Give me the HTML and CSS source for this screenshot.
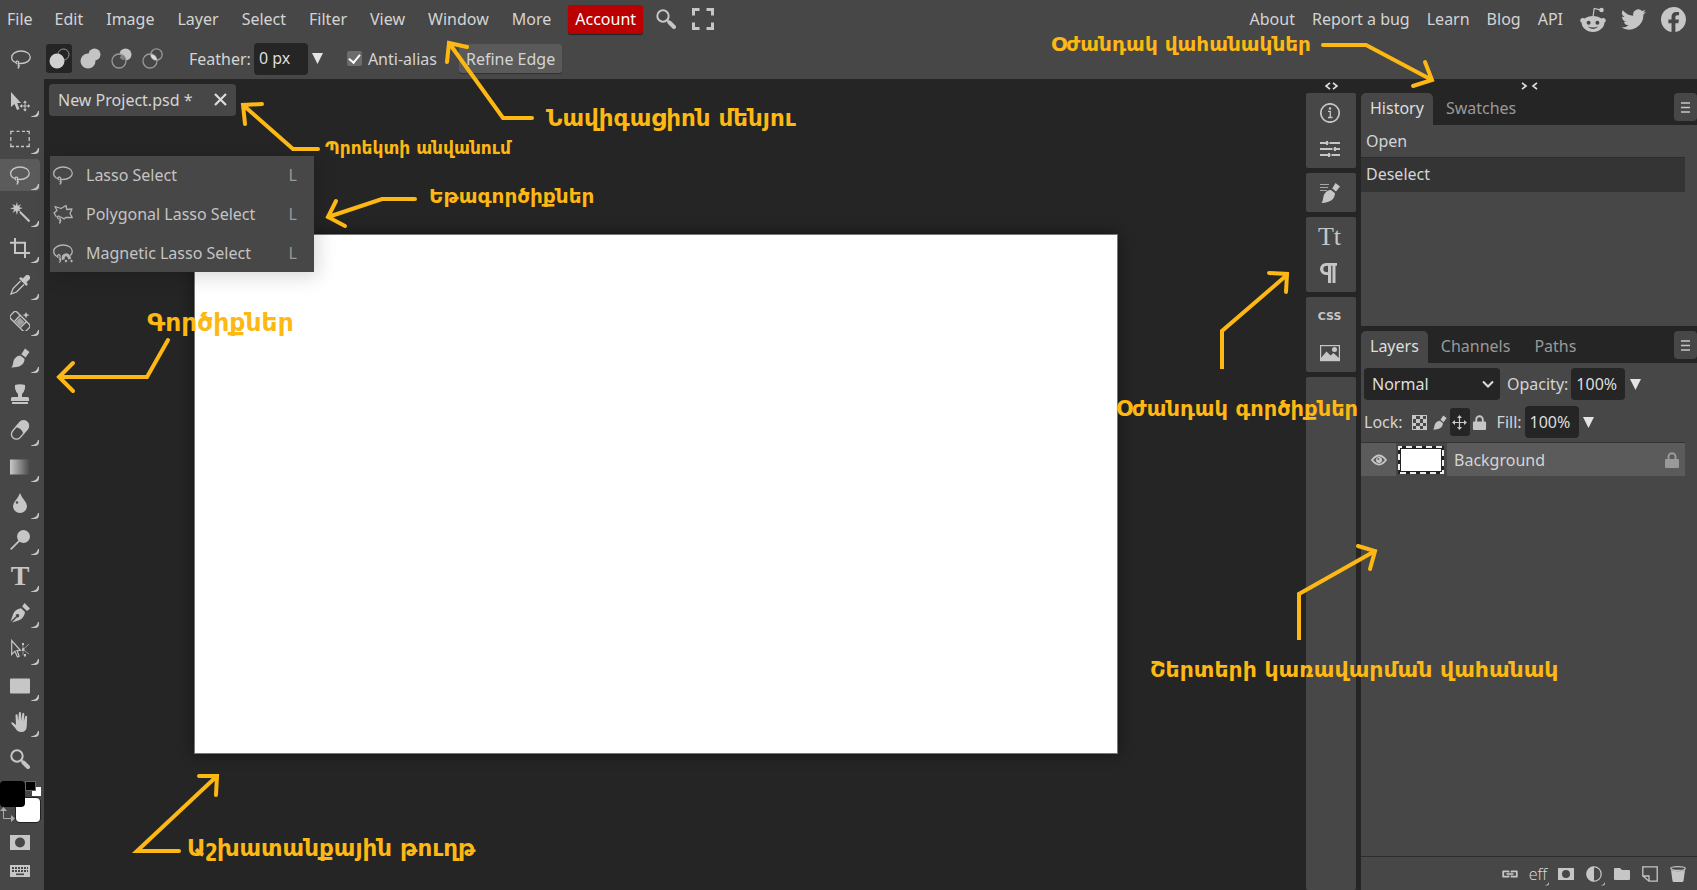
FILE: index.html
```html
<!DOCTYPE html>
<html lang="en">
<head>
<meta charset="utf-8">
<title>New Project.psd *</title>
<link rel="stylesheet" href="styles.css">
</head>
<body>
<svg class="defs" aria-hidden="true">
  <defs>
    <linearGradient id="fade"><stop offset="0" stop-color="#c8c8c8"/><stop offset="1" stop-color="#474747"/></linearGradient>
    <symbol id="lasso" viewBox="0 0 20 20"><g fill="none" stroke="currentColor" stroke-width="1.3"><path d="M5 13.500C2 12.500.7 10.500.7 8.400.7 4.800 4.800 2 10 2s9.300 2.700 9.300 6.200-4.100 6.300-9.300 6.300c-1 0-2-.1-2.800-.3"/><path d="M7.500 14.200c.6-1.400-.6-2.500-1.700-2-1.300.6-.9 2.500.4 2.700M7 14.200c1 1.200 1 2.600-.4 2.500M7.600 15.500c.9 1 .6 2.500-.8 4"/></g></symbol>
    <symbol id="poly" viewBox="0 0 20 20"><g fill="none" stroke="currentColor" stroke-width="1.300" stroke-linejoin="round"><path d="M3.500 13 1 9l3-2.500L2 2.500l6 2 5-3 .8 4 5.200-.5-2 4.500 2.300 4-6.300-.2-2 1.700L8 13"/><path d="M7 14.200c.6-1.400-.6-2.500-1.700-2-1.300.6-.9 2.500.4 2.700M6.500 14.200c1 1.200 1 2.600-.4 2.500M7.100 15.500c.9 1 .6 2.500-.8 4"/></g></symbol>
    <symbol id="magnet" viewBox="0 0 20 20"><g fill="none" stroke="currentColor" stroke-width="1.300"><path d="M4 13.500C2 12.500.7 10.500.7 8.400.7 4.800 4.800 2 10 2s9.300 2.700 9.300 6.200c0 1.800-.8 3.200-2 4.300"/><path d="M7 13.800c.6-1.400-.6-2.500-1.700-2-1.300.6-.9 2.500.4 2.700M6.500 14.200c1 1.200 1 2.600-.4 2.500M7.100 15.500c.9 1 .6 2.500-.8 4"/><path stroke-width="3" d="M10.500 16.500c-1.600-4 3-6 5-3.500l1.500 3"/><path stroke-width="2" d="M12 18.500l2-1M18 17l1 2"/></g></symbol>
    <symbol id="brush" viewBox="0 0 20 20"><path fill="currentColor" d="M15 .5 19.500 4l-4 5.500-4.200-3.200zM10.300 7.500l4.200 3.200c.3 3-1.500 6-4.500 7.300-2.500 1.200-5.500 1.500-8.800 1.400 2-1.500 1.500-3.500 2.300-6.200.9-3 3.700-5.500 6.800-5.700z"/></symbol>
    <symbol id="glass" viewBox="0 0 20 20"><circle cx="7" cy="7" r="5.700" fill="none" stroke="currentColor" stroke-width="2"/><path d="m11 11 2 2" stroke="currentColor" stroke-width="2"/><path d="m13.500 13.500 4.500 4.500" stroke="currentColor" stroke-width="4" stroke-linecap="round"/></symbol>
    <symbol id="corner" viewBox="0 0 8 6"><path fill="currentColor" d="M0 5.500C4 5 6.500 3 7 0H8v2C8 4.500 6.500 6 4 6H0z"/></symbol>
    <symbol id="lock" viewBox="0 0 14 16"><path fill="currentColor" d="M1 7h12q1 0 1 1v7q0 1-1 1H1q-1 0-1-1V8q0-1 1-1z"/><path d="M3.500 8V4.800a3.500 3.500 0 0 1 7 0V8" fill="none" stroke="currentColor" stroke-width="2"/></symbol>
    <symbol id="down" viewBox="0 0 11 11"><path fill="currentColor" d="M0 0h11L5.500 11z"/></symbol>
    <symbol id="lines" viewBox="0 0 9 11"><path d="M0 1h9M0 5.500h9M0 10h9" stroke="currentColor" stroke-width="1.300"/></symbol>
    <symbol id="mask" viewBox="0 0 20 15"><path fill="currentColor" fill-rule="evenodd" d="M0 0h20v15H0zM10 2.500a5 5 0 1 0 0 10 5 5 0 0 0 0-10z"/></symbol>
  </defs>
</svg>

<div class="app">
  <header class="menubar">
    <nav class="menus" aria-label="Main menu">
      <button>File</button><button>Edit</button><button>Image</button><button>Layer</button><button>Select</button><button>Filter</button><button>View</button><button>Window</button><button>More</button>
      <button class="account">Account</button>
      <button class="head-icon" aria-label="Search"><svg class="i20"><use href="#glass"/></svg></button>
      <button class="head-icon full" aria-label="Fullscreen"><svg class="i22" viewBox="0 0 22 22"><path d="M1.500 7.500v-6h6M14.500 1.500h6v6M20.500 14.500v6h-6M7.500 20.500h-6v-6" fill="none" stroke="currentColor" stroke-width="3"/></svg></button>
    </nav>
    <nav class="links" aria-label="Site">
      <a href="#">About</a><a href="#">Report a bug</a><a href="#">Learn</a><a href="#">Blog</a><a href="#">API</a>
      <a href="#" aria-label="Reddit"><svg class="i26" viewBox="0 0 26 26"><path fill="currentColor" fill-rule="evenodd" d="M13 10c3.400 0 6.300 1 8.300 2.500 1.200-1 3.200-.8 4 .6.900 1.400.4 3-.9 3.700C24.300 21.500 19.500 26 13 26S1.700 21.500 1.600 16.800C.3 16.100-.2 14.500.7 13.100c.8-1.400 2.800-1.600 4-.6C6.700 11 9.600 10 13 10zM8.600 14.700a2 2 0 1 0 0 4 2 2 0 0 0 0-4zm8.800 0a2 2 0 1 0 0 4 2 2 0 0 0 0-4zM7.800 20.500c2.800 3.200 7.600 3.200 10.400 0-3 1.300-7.400 1.300-10.400 0z"/><path d="m13 11 1.200-8.500 6 1.300" fill="none" stroke="currentColor" stroke-width="1.200"/><circle cx="21.500" cy="4" r="2.300" fill="currentColor"/></svg></a>
      <a href="#" aria-label="Twitter"><svg class="i25" viewBox="0 0 24 24"><path fill="currentColor" d="M24 4.600a10 10 0 0 1-2.800.8 5 5 0 0 0 2.100-2.700 10 10 0 0 1-3.100 1.200 4.900 4.900 0 0 0-8.400 4.500A14 14 0 0 1 1.700 3.200a4.900 4.900 0 0 0 1.500 6.500 5 5 0 0 1-2.200-.6 4.900 4.900 0 0 0 3.900 4.900 5 5 0 0 1-2.200.1 4.900 4.900 0 0 0 4.600 3.400A9.900 9.900 0 0 1 0 19.500 14 14 0 0 0 21.500 7.100 10 10 0 0 0 24 4.600z"/></svg></a>
      <a href="#" aria-label="Facebook"><svg class="i25" viewBox="0 0 24 24"><path fill="currentColor" d="M24 12a12 12 0 1 0-13.900 11.900v-8.400H7.100V12h3V9.400c0-3 1.800-4.700 4.500-4.700 1.400 0 2.700.2 2.700.2v3h-1.500c-1.500 0-2 .9-2 1.900V12h3.400l-.5 3.500h-2.900v8.400A12 12 0 0 0 24 12z"/></svg></a>
    </nav>
  </header>

  <div class="options">
    <svg class="i20 opt-tool"><use href="#lasso"/></svg>
    <div class="bools">
      <button class="on" aria-label="New selection"><svg viewBox="0 0 21 21"><circle cx="14.500" cy="6.500" r="5.500" fill="none" stroke="#999"/><circle cx="8" cy="13" r="7.500" fill="#d0d0d0"/></svg></button>
      <button aria-label="Unite"><svg viewBox="0 0 21 21"><path d="M14.500 6.500 8 13" stroke="#c4c4c4" stroke-width="9"/><circle cx="14.500" cy="6.500" r="6" fill="#c4c4c4"/><circle cx="8" cy="13" r="7.500" fill="#c4c4c4"/></svg></button>
      <button aria-label="Subtract"><svg viewBox="0 0 21 21"><circle cx="14.500" cy="6.500" r="6" fill="#c4c4c4"/><circle cx="8" cy="13" r="7" fill="#474747" stroke="#999" stroke-width="1.300"/><path d="M9 10a6 6 0 0 0 5 2 7 7 0 0 0-4-5z" fill="#c4c4c4" opacity=".5"/></svg></button>
      <button aria-label="Intersect"><svg viewBox="0 0 21 21"><circle cx="14.500" cy="6.500" r="5.700" fill="none" stroke="#999" stroke-width="1.300"/><circle cx="8" cy="13" r="7" fill="none" stroke="#999" stroke-width="1.300"/><path d="M8.800 6.200a6 6 0 0 0 6 6A7 7 0 0 0 8.800 6.200z" fill="#ddd"/></svg></button>
    </div>
    <label for="feather">Feather:</label>
    <input class="field" id="feather" value="0 px">
    <button class="drop" aria-label="Feather range"><svg><use href="#down"/></svg></button>
    <label class="check"><input type="checkbox" checked>Anti-alias</label>
    <button class="refine">Refine Edge</button>
  </div>

  <div class="main">
    <aside class="side">
      <div class="tools">
        <button aria-label="Move"><svg class="i20" viewBox="0 0 20 20"><path fill="currentColor" d="M1 0v15l3.500-3L7 18l2.500-1L7.200 11H11z"/><path d="M15 9.500v9M10.500 14h9" stroke="currentColor"/><path fill="currentColor" d="m15 8.500 2 2.300h-4zM15 19.500l2-2.300h-4zM9.800 14l2.200-2v4zM20 14l-2-2v4z"/></svg><svg class="corner"><use href="#corner"/></svg></button>
        <button aria-label="Rectangle select"><svg class="i20" viewBox="0 0 20 20"><path d="M.8 5.500V2.300h3M6.500 2.300h3M12 2.300h3M16.500 2.300h2.700v3M19.200 8v4M19.200 14.500v3h-3M14 17.500h-3M9 17.500H6M4 17.500H.8v-3M.8 12V8" fill="none" stroke="currentColor" stroke-width="1.300"/></svg><svg class="corner"><use href="#corner"/></svg></button>
        <button class="on" aria-label="Lasso"><svg class="i20"><use href="#lasso"/></svg><svg class="corner"><use href="#corner"/></svg></button>
        <button aria-label="Magic wand"><svg class="i20" viewBox="0 0 20 20"><path fill="currentColor" d="m7 0 .8 4L11 2 9.200 5.200l3.800.8-3.700 1.300L11 10 8 8.600 7 13 5.700 8.700 2.500 11l1.700-3.500L0 6.500l4-1.200L2.300 2l3.400 1.800z"/><path d="m10 10 9.500 9.500" stroke="currentColor" stroke-width="2"/></svg><svg class="corner"><use href="#corner"/></svg></button>
        <button aria-label="Crop"><svg class="i20" viewBox="0 0 20 20"><path d="M5 0v15h15M0 4.800h15V20" fill="none" stroke="currentColor" stroke-width="2"/></svg><svg class="corner"><use href="#corner"/></svg></button>
        <button aria-label="Eyedropper"><svg class="i20" viewBox="0 0 20 20"><path d="M10.500 6 3 13.500 1 19l5.500-2L14 9.500" fill="none" stroke="currentColor" stroke-width="1.300"/><path fill="currentColor" d="m9 3.500 2-1.500 1.800 1.500L15.500.8a2.700 2.700 0 0 1 3.900 3.800L16.500 7.300l1.400 1.900-1.600 1.900z"/></svg><svg class="corner"><use href="#corner"/></svg></button>
        <button aria-label="Healing brush"><svg class="i20" viewBox="0 0 20 20"><g fill="none" stroke="currentColor" stroke-width="1.300"><rect x="-1" y="6" width="22" height="9" rx="2.500" transform="rotate(45 10 10.500)"/><path d="m4.500 10.500 5.500-6M10.500 16.500l6-6"/></g><path fill="currentColor" d="m10 6.500 4.500 4.500-4.500 4.500L5.500 11z" opacity=".7"/><path fill="currentColor" d="m16 1 1 2.200 2.500.8-2.500 1-1 2.500-1-2.500L12.500 4l2.500-.8z"/></svg><svg class="corner"><use href="#corner"/></svg></button>
        <button aria-label="Brush"><svg class="i20"><use href="#brush"/></svg><svg class="corner"><use href="#corner"/></svg></button>
        <button aria-label="Clone stamp"><svg class="i20" viewBox="0 0 20 20"><path fill="currentColor" d="M5 1q5-1.500 10 0v3.500q-1 4-3 5.500v3h5.500q1.500 0 1.500 1.500V17H1v-2.500Q1 13 2.500 13H8v-3Q6 8.500 5 4.500zM2 18h16v2H2z"/></svg></button>
        <button aria-label="Eraser"><svg class="i20" viewBox="0 0 20 20"><g transform="rotate(-50 10 10)"><rect x="-.500" y="5" width="21" height="10" rx="5" fill="none" stroke="currentColor" stroke-width="1.300"/><path fill="currentColor" d="M9 4.500h6.500a5.500 5.500 0 0 1 0 11H9q4-5.500 0-11z"/></g></svg><svg class="corner"><use href="#corner"/></svg></button>
        <button aria-label="Gradient"><svg class="i20" viewBox="0 0 20 20"><path fill="url(#fade)" d="M0 2.500h20v15H0z"/></svg><svg class="corner"><use href="#corner"/></svg></button>
        <button aria-label="Blur"><svg class="i20" viewBox="0 0 20 20"><path fill="currentColor" d="M10 0q1.500 4 4.500 7.500 2.500 3 2.500 5.500a7 7 0 0 1-14 0q0-2.500 2.500-5.500Q8.500 4 10 0z"/><circle cx="7" cy="9.500" r="1.200" fill="#474747"/></svg><svg class="corner"><use href="#corner"/></svg></button>
        <button aria-label="Dodge"><svg class="i20" viewBox="0 0 20 20"><circle cx="13.500" cy="6.500" r="6.500" fill="currentColor"/><path d="m.7 19.300 9-9" stroke="currentColor" stroke-width="1.800"/></svg><svg class="corner"><use href="#corner"/></svg></button>
        <button aria-label="Type"><span class="glyph-t">T</span><svg class="corner"><use href="#corner"/></svg></button>
        <button aria-label="Pen"><svg class="i20" viewBox="0 0 20 20"><path fill="currentColor" d="M14.500 0 20 5.500l-3 2.500-4.800-4.500zM11 5.200l4 3.900c-.4 4-2.500 6.900-6 8.200L2 19.600l5-5.400a1.700 1.700 0 1 0-1-1L.5 18.500 3 11.500C4.300 7.800 7 5.600 11 5.200z"/></svg><svg class="corner"><use href="#corner"/></svg></button>
        <button aria-label="Path select"><svg class="i20" viewBox="0 0 20 20"><path d="M1.700 1.500v14l3.200-3.300L7.500 18l1.700-.8L7 11.500h3.500z" fill="none" stroke="currentColor" stroke-width="1.200"/><path d="M13 4.500v12M13 10.500 19 5M13 10.500l6 4.500" stroke="currentColor" fill="none" opacity=".6"/><path fill="currentColor" d="M12 9.300h2.400v2.400H12zM12 4h2v2h-2zM14 15h2v2.500h-2z"/></svg><svg class="corner"><use href="#corner"/></svg></button>
        <button aria-label="Rectangle"><svg class="i20" viewBox="0 0 20 20"><rect y="2.500" width="20" height="15" rx="1" fill="currentColor"/></svg><svg class="corner"><use href="#corner"/></svg></button>
        <button aria-label="Hand"><svg class="i20" viewBox="0 0 20 20"><path fill="currentColor" d="M6 13 5.500 3.500q.1-1.200 1-1.200t1.100 1.200l.7 5.500.5-7.700Q9 0 9.900 0 11 0 11 1.300l.3 7.500 1-7Q12.500.7 13.400.9q1 .2.900 1.300L13.800 9.500l1.300-5Q15.500 3.500 16.300 3.700q1 .3.800 1.500L16.800 14q-.3 6-5.600 6-4 0-6-4L1.500 11.800q-.7-1.200.2-1.500Q3 10 6 13z"/></svg><svg class="corner"><use href="#corner"/></svg></button>
        <button aria-label="Zoom"><svg class="i20"><use href="#glass"/></svg></button>
      </div>
      <div class="colors">
        <button class="bg" aria-label="Background colour"></button>
        <button class="fg" aria-label="Foreground colour"></button>
        <button class="mini-w" aria-label="Default white"></button>
        <button class="mini-b" aria-label="Default black"></button>
        <svg class="swap" viewBox="0 0 15 15"><path d="M3.500 3v8.500H12" fill="none" stroke="#aaa"/><path fill="#aaa" d="M3.500 0 7 4H0zM15 11.500 11 15V8z"/></svg>
      </div>
      <div class="modes">
        <button aria-label="Quick mask"><svg viewBox="0 0 20 15"><use href="#mask"/></svg></button>
        <button aria-label="Keyboard"><svg class="keys" viewBox="0 0 20 12"><rect width="20" height="12" fill="currentColor"/><path d="M2 3h16M2 6h16" stroke="#474747" stroke-width="1.800" stroke-dasharray="2 1"/><path d="M6 9.300h8" stroke="#474747" stroke-width="1.600"/></svg></button>
      </div>
    </aside>

    <main class="stage">
      <div class="doc-tab"><span>New Project.psd *</span><button aria-label="Close"><svg viewBox="0 0 13 13"><path d="m1 1 11 11M12 1 1 12" stroke="currentColor" stroke-width="2.200"/></svg></button></div>
      <div class="board"><div class="paper"></div></div>
      <div class="flyout" role="menu">
        <button role="menuitem"><svg class="i20"><use href="#lasso"/></svg><span>Lasso Select</span><kbd>L</kbd></button>
        <button role="menuitem"><svg class="i20"><use href="#poly"/></svg><span>Polygonal Lasso Select</span><kbd>L</kbd></button>
        <button role="menuitem"><svg class="i20"><use href="#magnet"/></svg><span>Magnetic Lasso Select</span><kbd>L</kbd></button>
      </div>
    </main>

    <div class="rail">
      <button class="fold" aria-label="Expand"><svg width="13" height="8" viewBox="0 0 13 8"><path d="M5 .8 1 4l4 3.200M8 .8 12 4 8 7.200" fill="none" stroke="currentColor" stroke-width="1.700"/></svg></button>
      <div class="group">
        <button aria-label="Info"><svg class="i20" viewBox="0 0 20 20"><circle cx="10" cy="10" r="9.200" fill="none" stroke="currentColor" stroke-width="1.700"/><path d="M8 8.300h2.300v6M8 14.500h4.500" fill="none" stroke="currentColor" stroke-width="1.300"/><circle cx="10" cy="5.500" r="1.200" fill="currentColor"/></svg></button>
        <button aria-label="Properties"><svg class="i20" viewBox="0 0 20 20"><path d="M0 4h20M0 10h20M0 16h20" stroke="currentColor" stroke-width="1.900"/><path d="M7 2v4M15 8v4M9 14v4" stroke="currentColor" stroke-width="2"/><path d="M9 2v4M13 8v4M11 14v4" stroke="#474747"/></svg></button>
      </div>
      <div class="group">
        <button aria-label="Brush settings"><svg class="i20" viewBox="0 0 20 20"><path d="M0 1.500h9M0 4.500h8M0 7.500h7" stroke="currentColor" opacity=".75"/><path fill="currentColor" d="M15.500 0 20 3.500l-4 5-3.800-3zM11 7l4 3.300c-.2 5-3.500 9.500-13.500 9.700 1.500-2 1.300-4 2-6.500C4.500 9.500 7.500 7 11 7z"/></svg></button>
      </div>
      <div class="group">
        <button class="glyph-tt" aria-label="Character">Tt</button>
        <button aria-label="Paragraph"><svg class="i20" viewBox="0 0 20 20"><path fill="currentColor" d="M6 0h11v2.700h-1.500V20h-3V2.700h-1.300V20H8v-8H6A6 6 0 0 1 6 0zm2 2.700Q3.300 2.600 3.300 6T8 9.300z"/></svg></button>
      </div>
      <div class="group">
        <button class="glyph-css">CSS</button>
        <button aria-label="Image"><svg class="i20" viewBox="0 0 20 20"><rect x=".6" y="2.600" width="18.800" height="15" fill="none" stroke="currentColor" stroke-width="1.200"/><path fill="currentColor" d="M1 15 6.500 8.500l4 4 3-2.500L19 15v3H1z"/><circle cx="14.500" cy="6.500" r="2.500" fill="currentColor"/></svg></button>
      </div>
      <div class="group rest"></div>
    </div>

    <aside class="panels">
      <button class="fold" aria-label="Collapse"><svg width="17" height="8" viewBox="0 0 17 8"><path d="M1 .8 5 4 1 7.200M16 .8 12 4l4 3.200" fill="none" stroke="currentColor" stroke-width="1.700"/></svg></button>
      <section class="panel history">
        <div class="tabs"><button class="on">History</button><button>Swatches</button><button class="more" aria-label="Panel menu"><svg><use href="#lines"/></svg></button></div>
        <ul class="body steps"><li>Open</li><li class="on">Deselect</li></ul>
      </section>
      <section class="panel layers">
        <div class="tabs"><button class="on">Layers</button><button>Channels</button><button>Paths</button><button class="more" aria-label="Panel menu"><svg><use href="#lines"/></svg></button></div>
        <div class="body">
          <div class="row">
            <span class="pick"><select aria-label="Blend mode"><option>Normal</option></select><svg viewBox="0 0 12 8"><path d="m1 1.500 5 5 5-5" fill="none" stroke="currentColor" stroke-width="2"/></svg></span>
            <label for="opacity">Opacity:</label><input class="field" id="opacity" value="100%">
            <button class="drop" aria-label="Opacity range"><svg><use href="#down"/></svg></button>
          </div>
          <div class="row">
            <span>Lock:</span>
            <span class="locks">
              <button aria-label="Lock transparency"><svg viewBox="0 0 15 15"><rect x=".5" y=".5" width="14" height="14" fill="none" stroke="currentColor"/><path fill="currentColor" d="M1 1h3v3H1zM8 1h3v3H8zM4 4h4v4H4zM11 4h3v4h-3zM1 8h3v3H1zM8 8h3v3H8zM4 11h4v3H4zM11 11h3v3h-3z"/></svg></button>
              <button aria-label="Lock pixels"><svg><use href="#brush"/></svg></button>
              <button class="on" aria-label="Lock position"><svg viewBox="0 0 15 15"><path d="M7.500 1v13M1 7.500h13" stroke="currentColor" stroke-width="1.200"/><path fill="currentColor" d="M7.500 0 10 3H5zM7.500 15 10 12H5zM0 7.500 3 5v5zM15 7.500 12 5v5z"/></svg></button>
              <button aria-label="Lock all"><svg><use href="#lock"/></svg></button>
            </span>
            <label for="fill">Fill:</label><input class="field" id="fill" value="100%">
            <button class="drop" aria-label="Fill range"><svg><use href="#down"/></svg></button>
          </div>
          <div class="layer">
            <button class="eye" aria-label="Visibility"><svg viewBox="0 0 16 12"><path d="M1 6q7-9 14 0-7 9-14 0z" fill="none" stroke="currentColor" stroke-width="1.800"/><circle cx="8" cy="6" r="3" fill="currentColor"/><circle cx="7.300" cy="5" r="1" fill="#5b5b5b"/></svg></button>
            <div class="thumb"><svg viewBox="0 0 46 28"><path fill="#222" d="M0 0h46v28H0z"/><rect x="1" y="1" width="44" height="26" fill="none" stroke="#eee" stroke-width="2" stroke-dasharray="6 4" stroke-dashoffset="3"/><path fill="#fff" d="M3 3h40v22H3z"/></svg></div>
            <span class="layer-name">Background</span>
            <svg class="layer-lock"><use href="#lock"/></svg>
          </div>
          <div class="blank"></div>
          <footer class="foot">
            <button aria-label="Link"><svg viewBox="0 0 16 16"><path d="M6.500 6.500V5.300H1.200v5.400h5.300V9.500M9.500 6.500V5.300h5.300v5.400H9.500V9.500" fill="none" stroke="currentColor" stroke-width="1.800" stroke-linejoin="round"/><path d="M4.500 8h7" stroke="currentColor" stroke-width="1.600"/></svg></button>
            <button class="eff">eff<svg class="dot"><use href="#corner"/></svg></button>
            <button aria-label="Mask"><svg viewBox="0 0 20 15"><use href="#mask"/></svg></button>
            <button aria-label="Adjustment"><svg viewBox="0 0 16 16"><circle cx="8" cy="8" r="7.200" fill="none" stroke="currentColor" stroke-width="1.200"/><path fill="currentColor" d="M8 .5v15A7.500 7.500 0 0 1 8 .5z"/></svg><svg class="dot"><use href="#corner"/></svg></button>
            <button aria-label="Folder"><svg viewBox="0 0 16 16"><path fill="currentColor" d="M1 2h5l2 2h7q1 0 1 1v8q0 1-1 1H1q-1 0-1-1V3q0-1 1-1z"/></svg></button>
            <button aria-label="New layer"><svg viewBox="0 0 16 16"><path d="M.8.8h14.400v14.400H7L.8 10zM.8 10H7v5" fill="none" stroke="currentColor" stroke-width="1.300"/></svg></button>
            <button aria-label="Delete"><svg viewBox="0 0 16 16"><path fill="currentColor" d="M1 4q7 2.500 14 0l-1.500 11q-.2 1-1.500 1H4q-1.300 0-1.500-1z"/><ellipse cx="8" cy="2.500" rx="7.300" ry="1.900" fill="none" stroke="currentColor" stroke-width="1.200"/></svg></button>
          </footer>
        </div>
      </section>
    </aside>
  </div>
</div>

<div class="notes" lang="hy">
  <svg class="arrows" viewBox="0 0 1697 890" width="1697" height="890">
    <path d="M532 118h-29L449 43M467 47l-18-4-2 19"/>
    <path d="M318 149h-25l-50-44M262 104l-19 1 2 19"/>
    <path d="M415 199h-33l-54 18M336 201l-8 16 17 9"/>
    <path d="M1323 45h43l66 35M1425 62l7 18-19 6"/>
    <path d="M168 340l-21 37H60M73 363l-14 14 14 14"/>
    <path class="butt" d="M1222 369v-38l66-57"/><path d="M1269 273l18 1-1 18"/>
    <path class="butt" d="M1299 640v-46l76-43"/><path d="M1358 546l17 5-5 18"/>
    <path d="M179 851h-42l80-75M199 776l18 0-1 19"/>
  </svg>
  <span class="note n1 lg">Նավիգացիոն մենյու</span>
  <span class="note n2 sm">Պրոեկտի անվանում</span>
  <span class="note n3 md">Եթագործիքներ</span>
  <span class="note n4 md">Օժանդակ վահանակներ</span>
  <span class="note n5 xl">Գործիքներ</span>
  <span class="note n6">Օժանդակ գործիքներ</span>
  <span class="note n7">Շերտերի կառավարման վահանակ</span>
  <span class="note n8 lg">Աշխատանքային թուղթ</span>
</div>
</body>
</html>
```
FILE: styles.css
```css
* { box-sizing: border-box; }
body { margin: 0; background: #252525; color: #d4d4d4; font: 16px/22px "Noto Sans", "Open Sans", sans-serif; overflow: hidden; }
button, input, select { font: inherit; color: inherit; margin: 0; padding: 0; border: 0; background: none; }
button { display: flex; align-items: center; justify-content: center; white-space: nowrap; }
a { color: inherit; text-decoration: none; display: flex; }
svg { display: block; flex: none; color: #c6c6c6; }
.defs { position: absolute; width: 0; height: 0; }
.i20 { width: 20px; height: 20px; }
.i22 { width: 22px; height: 22px; }
.i25 { width: 25px; height: 25px; }
.i26 { width: 26px; height: 26px; }

.app { display: flex; flex-direction: column; height: 100vh; }
.menubar { display: flex; justify-content: space-between; align-items: center; height: 38px; background: #474747; }
.menus { display: flex; align-items: center; }
.menus button { padding: 0 12px 0 11px; }
.menus button:first-child { padding: 0 11px 0 7px; }
.menus .account { height: 29px; margin-left: 5px; padding: 0 7px; border-radius: 3px; background: #ba0000; color: #fff; box-shadow: 0 1px 1px #222; }
.menus .head-icon { padding: 0 0 0 13px; }
.menus .full { padding-left: 16px; }
.links { display: flex; align-items: center; gap: 17px; padding-right: 11px; }
.links a:nth-child(n+7) { margin-left: -2px; }

.options { display: flex; align-items: center; height: 41px; padding: 0 0 0 11px; background: #474747; }
.bools { display: flex; gap: 5px; margin: 0 24px 0 15px; }
.bools button { width: 26px; height: 29px; border-radius: 3px; }
.bools .on { background: #252525; }
.bools svg { width: 21px; height: 21px; }
.field { width: 54px; height: 32px; margin-left: 3px; padding: 0 0 1px 5px; border-radius: 4px; background: #252525; color: #dedede; }
.drop { width: 20px; height: 30px; }
.drop svg { width: 11px; height: 11px; color: #e4e4e4; }
.check { display: flex; align-items: center; gap: 6px; margin-left: 19px; }
.check input { appearance: none; width: 15px; height: 15px; border-radius: 2px; background: #6c6c6c; display: grid; place-items: center; }
.check input::after { content: ""; width: 5px; height: 9px; margin-top: -2px; border: solid #fff; border-width: 0 2px 2px 0; transform: rotate(40deg); }
.refine { height: 29px; margin-left: 22px; padding: 0 7px; border-radius: 3px; background: #5a5a5a; box-shadow: 0 1px 1px #333; }

.main { display: flex; flex: 1; min-height: 0; background: #252525; }
.side { display: flex; flex-direction: column; width: 44px; padding-top: 5px; background: #474747; }
.tools { display: flex; flex: 1; flex-direction: column; }
.tools button { position: relative; flex: 1; width: 40px; }
.tools .on::before { content: ""; position: absolute; inset: 2px 0; background: #5b5b5b; border-radius: 0 4px 4px 0; }
.tools svg { position: relative; }
.tools .corner { position: absolute; right: 1px; bottom: 3px; width: 8px; height: 6px; }
.glyph-t { font: bold 28px/28px "Liberation Serif", serif; color: #c6c6c6; }
.colors { position: relative; height: 49px; }
.colors > * { position: absolute; }
.fg { left: 0; top: 4px; width: 25px; height: 26px; background: #000; border-radius: 4px; }
.bg { left: 16px; top: 21px; width: 24px; height: 24px; background: #fff; border-radius: 4px; box-shadow: 0 0 0 1px #222; }
.mini-b { left: 26px; top: 5px; width: 9px; height: 8px; background: #000; outline: 1px solid #666; }
.mini-w { left: 32px; top: 10px; width: 9px; height: 9px; background: #fff; }
.swap { left: 0; top: 30px; width: 15px; height: 15px; }
.modes { display: flex; flex-direction: column; gap: 15px; width: 40px; padding: 9px 0 13px; }
.modes svg { width: 20px; height: 15px; }
.modes .keys { height: 12px; }

.stage { position: relative; display: flex; flex: 1; flex-direction: column; min-width: 0; padding: 5px; }
.doc-tab { display: flex; align-self: flex-start; align-items: center; gap: 22px; height: 32px; padding: 0 9px 1px; border-radius: 4px; background: #474747; }
.doc-tab svg { width: 13px; height: 13px; color: #dedede; }
.board { display: flex; flex: 1; padding: 119px 184px 132px 146px; }
.paper { flex: 1; background: #fff; outline: 1px solid #777; box-shadow: 0 0 12px #111; }
.flyout { position: absolute; left: 6px; top: 77px; display: flex; flex-direction: column; gap: 1px; width: 264px; background: #474747; box-shadow: 4px 5px 18px rgba(0, 0, 0, .15); }
.flyout button { width: 100%; height: 38px; padding: 0 17px 0 3px; gap: 13px; color: #c4c4c4; }
.flyout span { flex: 1; text-align: left; }
.flyout svg { color: #b4b4b4; }
.flyout kbd { font: inherit; color: #999; }

.rail { display: flex; flex-direction: column; gap: 5px; width: 50px; margin-right: 5px; }
.fold { height: 14px; }
.fold svg { color: #dedede; }
.rail .fold { margin-bottom: -5px; }
.group { display: flex; flex-direction: column; align-items: center; padding: 2px 3px 1px 0; background: #474747; border-radius: 2px; }
.group button { width: 46px; height: 36px; }
.group .glyph-tt { font: 26px/26px "Liberation Serif", serif; color: #c6c6c6; }
.group .glyph-css { font: bold 11px/16px "DejaVu Sans", sans-serif; color: #c6c6c6; }
.rest { flex: 1; }

.panels { display: flex; flex-direction: column; width: 336px; }
.panels > .fold { width: 336px; }
.panel { display: flex; flex-direction: column; }
.history { height: 233px; }
.layers { flex: 1; margin-top: 5px; }
.tabs { display: flex; height: 32px; }
.tabs button { padding: 0 12px 3px; color: #999; }
.tabs .on { margin-right: 1px; padding: 0 9px 3px; background: #474747; color: #dedede; border-radius: 5px 5px 0 0; }
.tabs .more { width: 23px; height: 28px; margin-left: auto; padding: 0; background: #474747; border-radius: 4px; }
.more svg { width: 9px; height: 11px; }
.body { display: flex; flex: 1; flex-direction: column; margin: 0; padding: 0; background: #474747; list-style: none; }
.steps li { height: 32px; padding: 5px; }
.steps .on { height: 35px; margin-right: 12px; border-top: 1px solid #2c2c2c; background: #343434; }
.row { display: flex; align-items: center; height: 34px; padding-left: 3px; }
.layers .row:first-child { height: 42px; }
.pick { display: grid; width: 136px; margin-right: 7px; align-items: center; }
.pick > * { grid-area: 1 / 1; }
.pick select { appearance: none; height: 32px; padding: 0 8px; border-radius: 4px; background: #252525; color: #dedede; }
.pick svg { width: 12px; height: 8px; justify-self: end; margin-right: 6px; color: #dedede; pointer-events: none; }
.locks { display: flex; margin: 0 7px; }
.locks button { width: 20px; height: 28px; border-radius: 3px; }
.locks .on { background: #252525; }
.locks svg { width: 15px; height: 15px; }
.layer { display: flex; align-items: center; height: 34px; margin: 3px 12px 0 0; border-top: 1px solid #333; background: linear-gradient(90deg, #5b5b5b 35px, #474747 35px 86px, #5b5b5b 86px); }
.eye { width: 35px; height: 32px; }
.eye svg { width: 16px; height: 12px; }
.thumb { width: 51px; padding-left: 2px; }
.thumb svg { width: 46px; height: 28px; }
.layer-name { flex: 1; padding-left: 7px; }
.layer-lock { width: 14px; height: 16px; margin-right: 6px; color: #999; }
.blank { flex: 1; }
.foot { display: flex; justify-content: flex-end; gap: 12px; height: 34px; padding-right: 11px; border-top: 1px solid #2c2c2c; }
.foot button { position: relative; width: 16px; }
.foot svg { width: 16px; height: 16px; }
.foot .dot { position: absolute; right: -3px; bottom: 4px; width: 4px; height: 4px; }
.foot .eff { font-family: "Open Sans", sans-serif; font-weight: 300; color: #dedede; }

.notes { position: absolute; left: 0; top: 0; color: #fdb813; font-family: "DejaVu Sans", sans-serif; font-weight: bold; pointer-events: none; }
.arrows path { fill: none; stroke: #fdb813; stroke-width: 4; stroke-linecap: round; }
.arrows .butt { stroke-linecap: butt; }
.note { position: absolute; font-size: 21px; line-height: 30px; white-space: nowrap; }
.xl { font-size: 25px; }
.lg { font-size: 23px; }
.md { font-size: 20px; }
.sm { font-size: 17px; }
.n1 { left: 546px; top: 103px; }
.n2 { left: 325px; top: 133px; }
.n3 { left: 429px; top: 181px; }
.n4 { left: 1051px; top: 29px; }
.n5 { left: 147px; top: 308px; }
.n6 { left: 1116px; top: 394px; }
.n7 { left: 1150px; top: 655px; font-size: 22px; }
.n8 { left: 187px; top: 833px; }
```
